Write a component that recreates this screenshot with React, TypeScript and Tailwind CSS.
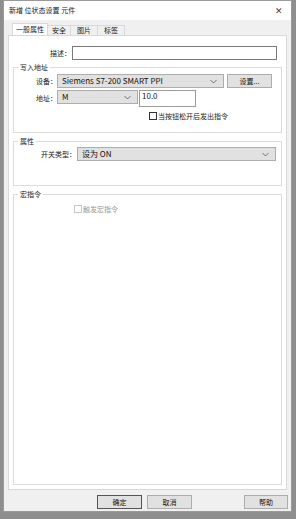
import React from 'react'

const font = { fontFamily: '"Noto Sans CJK SC", "Liberation Sans", sans-serif' }

function Chevron() {
  return (
    <svg width="7" height="5" viewBox="0 0 7 5" className="shrink-0">
      <path d="M0.5 1 L3.5 4 L6.5 1" fill="none" stroke="#555" strokeWidth="0.8" />
    </svg>
  )
}

function Select({ value, className }: { value: string; className: string }) {
  return (
    <div className={`flex items-center justify-between border border-[#adadad] bg-[#e1e1e1] pl-1 pr-1.5 ${className}`}>
      <span className="text-[8px] leading-none text-[#111]">{value}</span>
      <Chevron />
    </div>
  )
}

function Group({ title, className, children }: { title: string; className: string; children?: React.ReactNode }) {
  return (
    <div className={`relative mx-1 border border-[#dcdcdc] ${className}`}>
      <span className="absolute -top-[6px] left-1 bg-white px-0.5 text-[7px] leading-[10px] text-[#222]">{title}</span>
      {children}
    </div>
  )
}

function Btn({ label, primary, className }: { label: string; primary?: boolean; className: string }) {
  return (
    <div
      className={`flex h-[14px] items-center justify-center bg-[#e1e1e1] text-[7px] text-[#111] ${
        primary ? 'border border-[#555]' : 'border border-[#adadad]'
      } ${className}`}
    >
      {label}
    </div>
  )
}

export default function App() {
  return (
    <div className="flex h-[519px] w-[296px] bg-[#8e8e8e] pl-[3px] pr-[4px] pb-[7px]" style={font}>
      <div className="flex flex-1 flex-col border border-[#9a9a9a] bg-[#f0f0f0]">
        {/* title bar */}
        <div className="flex h-[19px] items-center justify-between bg-white pl-[5px] pr-2">
          <span className="text-[7px] text-[#222]">新增 位状态设置 元件</span>
          <span className="text-[9px] leading-none text-[#444]">✕</span>
        </div>

        {/* tabs */}
        <div className="mt-[3px] flex items-end pl-[8px] text-[7px] text-[#222]">
          <div className="flex h-[12px] items-center border border-b-0 border-[#d9d9d9] bg-white px-[3px]">一般属性</div>
          <div className="flex h-[10px] items-center border border-b-0 border-l-0 border-[#d9d9d9] bg-[#f0f0f0] px-[4px]">安全</div>
          <div className="flex h-[10px] items-center border border-b-0 border-l-0 border-[#d9d9d9] bg-[#f0f0f0] px-[6px]">图片</div>
          <div className="flex h-[10px] items-center border border-b-0 border-l-0 border-[#d9d9d9] bg-[#f0f0f0] px-[6px]">标签</div>
        </div>

        {/* panel */}
        <div className="mx-[4px] flex flex-1 flex-col border border-[#d9d9d9] bg-white pt-[10px] text-[7px] text-[#222]">
          <div className="flex items-center pr-[9px]">
            <span className="w-[63px] pr-[1px] text-right">描述：</span>
            <div className="h-[14px] flex-1 border border-[#7a7a7a] bg-white" />
          </div>

          <Group title="写入地址" className="mt-[7px] h-[66px]">
            <div className="mt-[6px] flex items-center">
              <span className="w-[43px] text-right">设备：</span>
              <Select value="Siemens S7-200 SMART PPI" className="h-[14px] w-[167px]" />
              <Btn label="设置..." className="ml-[3px] w-[45px]" />
            </div>
            <div className="mt-[2px] flex items-start">
              <span className="mt-[3px] w-[43px] text-right">地址：</span>
              <Select value="M" className="h-[14px] w-[81px]" />
              <div className="ml-[1px] flex h-[17px] w-[57px] items-start border border-[#9a9a9a] bg-white pl-[2px] pt-[1px]">
                <span className="text-[8px] leading-none">10.0</span>
              </div>
            </div>
            <div className="mt-[4px] flex items-center pl-[135px]">
              <div className="mr-[1px] h-[8px] w-[8px] border border-[#333] bg-white" />
              <span>当按钮松开后发出指令</span>
            </div>
          </Group>

          <Group title="属性" className="mt-[8px] h-[45px]">
            <div className="mt-[5px] flex items-center pr-[5px]">
              <span className="w-[63px] pr-[1px] text-right">开关类型：</span>
              <Select value="设为 ON" className="h-[14px] flex-1" />
            </div>
          </Group>

          <Group title="宏指令" className="mb-[4px] mt-[8px] flex-1">
            <div className="mt-[9px] flex items-center pl-[60px] text-[#999]">
              <div className="mr-[1px] h-[8px] w-[8px] border border-[#c8c8c8] bg-white" />
              <span>触发宏指令</span>
            </div>
          </Group>
        </div>

        {/* bottom buttons */}
        <div className="flex h-[21px] items-start pl-[93px] pr-[3px] pt-[5px]">
          <Btn label="确定" primary className="w-[45px]" />
          <Btn label="取消" className="ml-[5px] w-[45px]" />
          <div className="flex-1" />
          <Btn label="帮助" className="w-[44px]" />
        </div>
      </div>
    </div>
  )
}
